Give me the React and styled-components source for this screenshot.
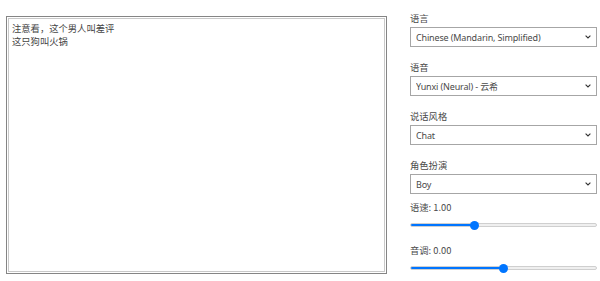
import React, { useState } from "react";
import styled, { createGlobalStyle } from "styled-components";

const GlobalStyle = createGlobalStyle`
  html, body {
    margin: 0;
    padding: 0;
    background: #fff;
  }
  body {
    font-family: "Noto Sans", "Noto Sans CJK SC", sans-serif;
  }
`;

const Page = styled.div`
  display: flex;
  align-items: flex-start;
  gap: 23px;
  padding: 11px 0 0 6px;
  width: 600px;
  height: 281px;
  box-sizing: border-box;
`;

const EditorFrame = styled.div`
  margin-top: 5px;
  width: 381px;
  height: 258px;
  box-sizing: border-box;
  border: 1px solid #858585;
  padding: 1px;
  display: flex;
`;

const Editor = styled.textarea`
  flex: 1;
  resize: none;
  border: 1px solid #c9c9c9;
  padding: 3px 3px;
  margin: 0;
  font-family: "Noto Sans CJK SC", sans-serif;
  font-size: 9.3px;
  line-height: 13px;
  color: #444;
  outline: none;
`;

const Panel = styled.div`
  width: 187px;
  display: flex;
  flex-direction: column;
`;

const Field = styled.div`
  display: flex;
  flex-direction: column;
  margin-bottom: ${p => p.$gap}px;
`;

const Label = styled.label`
  font-family: "Noto Sans CJK SC", sans-serif;
  font-size: 9.3px;
  line-height: 14px;
  color: #4a4a4a;
  margin-bottom: 2px;
`;

const SelectBox = styled.div`
  position: relative;
  width: 187px;
  height: 20px;
`;

const Select = styled.select`
  -webkit-appearance: none;
  appearance: none;
  display: block;
  height: 20px;
  width: 100%;
  box-sizing: border-box;
  border: 1px solid #a6a6a6;
  border-radius: 0;
  background: #fff;
  padding: 0 16px 0 5px;
  margin: 0;
  font-family: "Noto Sans", "Noto Sans CJK SC", sans-serif;
  font-size: 9px;
  letter-spacing: -0.15px;
  color: #4a4a4a;
  outline: none;
`;

const Chevron = styled.svg`
  position: absolute;
  right: 6px;
  top: 8px;
  width: 6px;
  height: 4px;
  pointer-events: none;
`;

const Range = styled.input`
  -webkit-appearance: none;
  appearance: none;
  width: 187px;
  height: 4px;
  margin: 7px 0 9px;
  border-radius: 2px;
  border: 1px solid #cfcfcf;
  box-sizing: border-box;
  outline: none;

  &::-webkit-slider-thumb {
    -webkit-appearance: none;
    width: 9px;
    height: 9px;
    border-radius: 50%;
    background: #0075ff;
    border: none;
  }
`;

function Dropdown({ label, value, gap }) {
  return (
    <Field $gap={gap}>
      <Label>{label}</Label>
      <SelectBox>
        <Select defaultValue={value}>
          <option value={value}>{value}</option>
        </Select>
        <Chevron viewBox="0 0 6 4">
          <path d="M0.6 0.6 L3 3 L5.4 0.6" fill="none" stroke="#333" strokeWidth="1.1" />
        </Chevron>
      </SelectBox>
    </Field>
  );
}

function Slider({ label, min, max, step, value, onChange, gap }) {
  const pct = ((value - min) / (max - min)) * 100;
  return (
    <Field $gap={gap}>
      <Label>{label}: {value.toFixed(2)}</Label>
      <Range
        type="range"
        min={min}
        max={max}
        step={step}
        value={value}
        onChange={e => onChange(parseFloat(e.target.value))}
        style={{ background: `linear-gradient(to right, #0075ff ${pct}%, #efefef ${pct}%)` }}
      />
    </Field>
  );
}

export default function App() {
  const [rate, setRate] = useState(1);
  const [pitch, setPitch] = useState(0);
  return (
    <>
      <GlobalStyle />
      <Page>
        <EditorFrame>
          <Editor defaultValue={"注意看，这个男人叫差评\n这只狗叫火锅"} />
        </EditorFrame>
        <Panel>
          <Dropdown label="语言" value="Chinese (Mandarin, Simplified)" gap={13} />
          <Dropdown label="语音" value="Yunxi (Neural) - 云希" gap={13} />
          <Dropdown label="说话风格" value="Chat" gap={13} />
          <Dropdown label="角色扮演" value="Boy" gap={6} />
          <Slider label="语速" min={0.5} max={2} step={0.01} value={rate} onChange={setRate} gap={7} />
          <Slider label="音调" min={-1} max={1} step={0.01} value={pitch} onChange={setPitch} gap={0} />
        </Panel>
      </Page>
    </>
  );
}
